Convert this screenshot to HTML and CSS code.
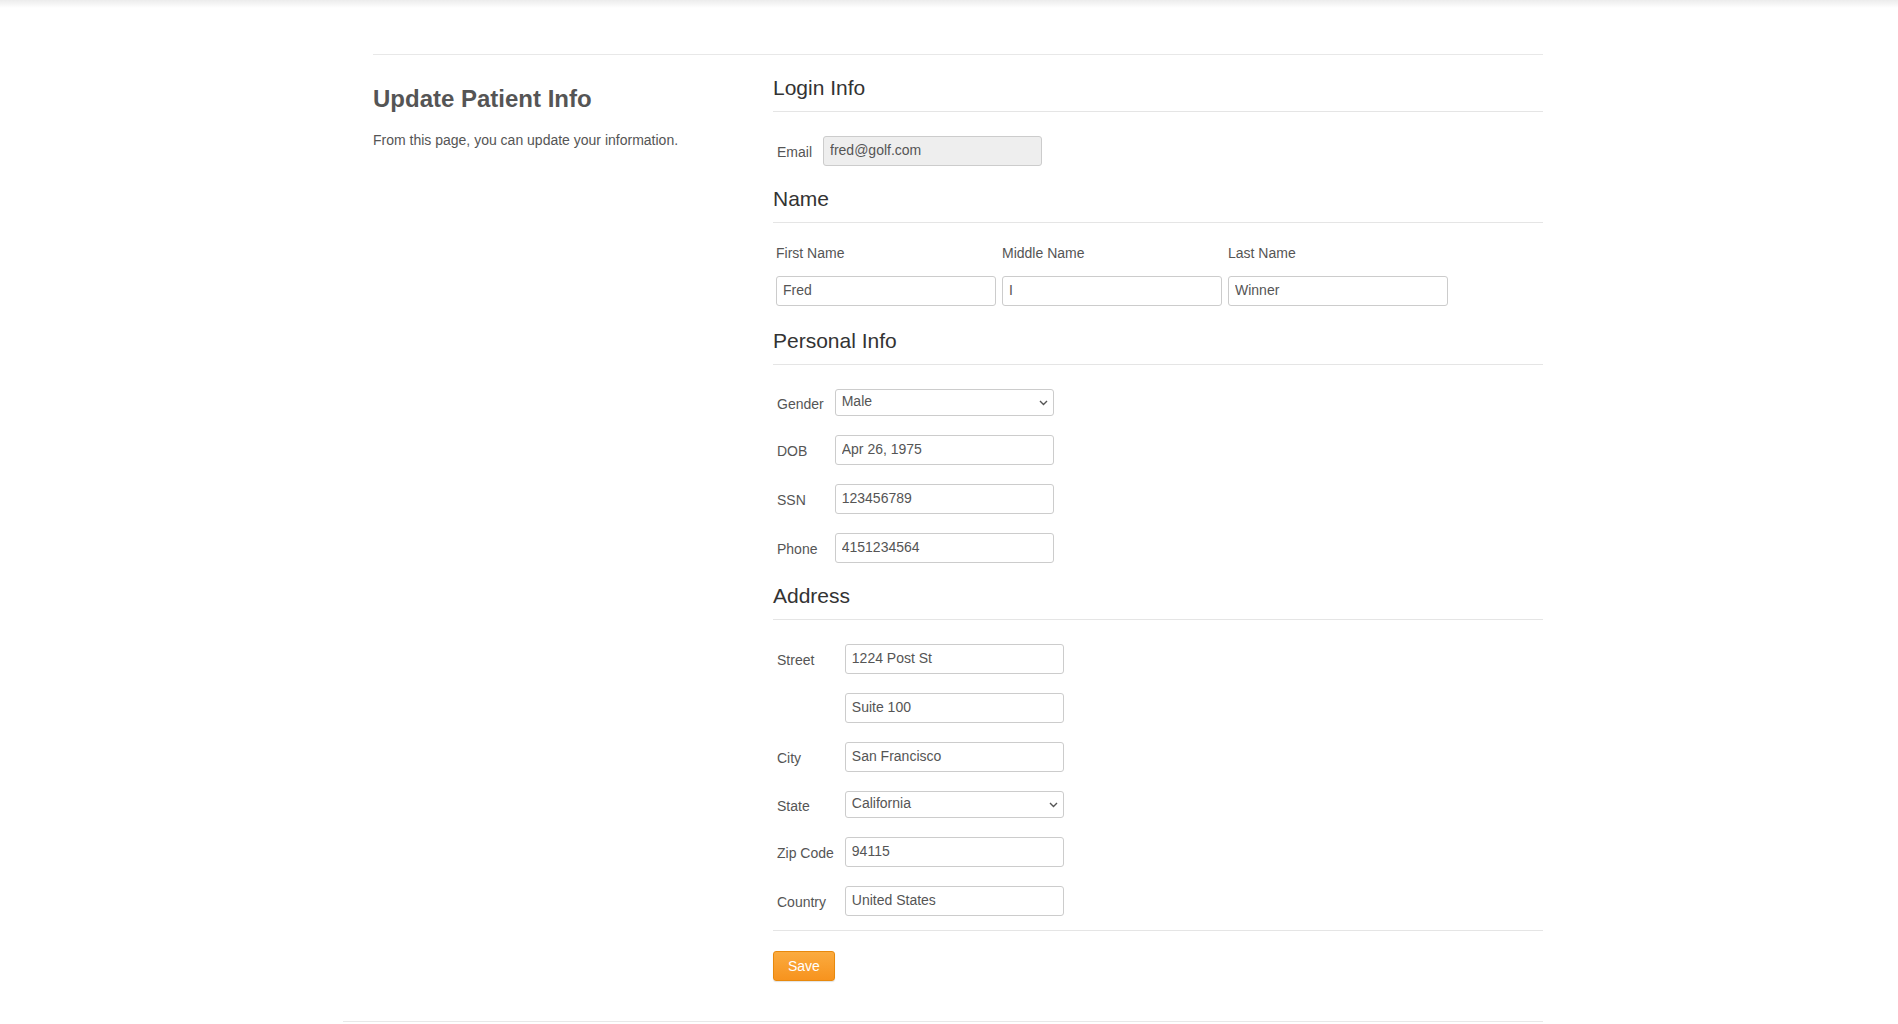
FILE: index.html
```html
<!DOCTYPE html>
<html lang="en">
<head>
<meta charset="utf-8">
<title>Update Patient Info</title>
<link rel="stylesheet" href="styles.css">
</head>
<body>
<div class="topshade"></div>
<div class="page">
  <div class="main">
    <aside class="sidebar">
      <h2 class="title">Update Patient Info</h2>
      <p class="lead">From this page, you can update your information.</p>
    </aside>
    <form class="content">
      <fieldset class="fs">
        <legend class="legend">Login Info</legend>
        <div class="form-grid">
          <label class="lbl">Email</label>
          <input class="field field-disabled" type="text" value="fred@golf.com" disabled>
        </div>
      </fieldset>

      <fieldset class="fs fs-name">
        <legend class="legend legend-name">Name</legend>
        <div class="name-grid">
          <label class="name-lbl">First Name</label>
          <label class="name-lbl">Middle Name</label>
          <label class="name-lbl">Last Name</label>
          <input class="field name-field" type="text" value="Fred">
          <input class="field name-field" type="text" value="I">
          <input class="field name-field" type="text" value="Winner">
        </div>
      </fieldset>

      <fieldset class="fs">
        <legend class="legend">Personal Info</legend>
        <div class="form-grid">
          <label class="lbl">Gender</label>
          <span class="select-wrap">
            <select class="select"><option>Male</option><option>Female</option></select>
            <svg class="chev" width="9" height="6" viewBox="0 0 9 6"><path d="M1 1 L4.5 4.5 L8 1" fill="none" stroke="#555" stroke-width="1.4"/></svg>
          </span>
          <label class="lbl">DOB</label>
          <input class="field" type="text" value="Apr 26, 1975">
          <label class="lbl">SSN</label>
          <input class="field" type="text" value="123456789">
          <label class="lbl">Phone</label>
          <input class="field" type="text" value="4151234564">
        </div>
      </fieldset>

      <fieldset class="fs">
        <legend class="legend">Address</legend>
        <div class="form-grid">
          <label class="lbl">Street</label>
          <input class="field" type="text" value="1224 Post St">
          <span class="lbl"></span>
          <input class="field" type="text" value="Suite 100">
          <label class="lbl">City</label>
          <input class="field" type="text" value="San Francisco">
          <label class="lbl">State</label>
          <span class="select-wrap">
            <select class="select"><option>California</option></select>
            <svg class="chev" width="9" height="6" viewBox="0 0 9 6"><path d="M1 1 L4.5 4.5 L8 1" fill="none" stroke="#555" stroke-width="1.4"/></svg>
          </span>
          <label class="lbl">Zip Code</label>
          <input class="field" type="text" value="94115">
          <label class="lbl">Country</label>
          <input class="field" type="text" value="United States">
        </div>
      </fieldset>

      <div class="actions">
        <button class="btn-save" type="button">Save</button>
      </div>
    </form>
  </div>
  <div class="footer"></div>
</div>
</body>
</html>
```

FILE: styles.css
```css
html, body {
  margin: 0;
  padding: 0;
  background: #fff;
}

body {
  font-family: "Liberation Sans", Arial, sans-serif;
  font-size: 14px;
  line-height: 20px;
  color: #555;
}

.topshade {
  height: 8px;
  background: linear-gradient(#ececec, #ffffff);
}

.page {
  width: 1200px;
  margin-left: 343px;
}

.main {
  margin-left: 30px;
  margin-top: 46px;
  border-top: 1px solid #e8e8e8;
  display: flex;
}

.sidebar {
  width: 400px;
  flex: none;
  padding-top: 31px;
}

.title {
  margin: 0;
  font-size: 24px;
  line-height: 26px;
  font-weight: bold;
  color: #555;
}

.lead {
  margin: 18px 0 0;
  font-size: 14px;
  line-height: 20px;
  color: #555;
}

.content {
  flex: 1;
  margin: 0;
  padding-top: 18px;
}

.fs {
  border: 0;
  margin: 0;
  padding: 0;
  min-width: 0;
}

.fs + .fs {
  margin-top: 18px;
}

.fs-name {
  padding-bottom: 2px;
}

.legend {
  display: block;
  width: 100%;
  padding: 0 0 8px;
  margin: 0 0 24px;
  font-size: 21px;
  line-height: 30px;
  color: #333;
  border-bottom: 1px solid #e5e5e5;
}

.legend-name {
  margin-bottom: 20px;
}

.form-grid {
  display: grid;
  grid-template-columns: max-content 219px;
  column-gap: 11px;
  row-gap: 19px;
  align-items: center;
  padding-left: 4px;
}

.lbl {
  font-size: 14px;
  line-height: 20px;
  color: #555;
  padding-top: 2px;
}

.field {
  box-sizing: border-box;
  height: 30px;
  width: 100%;
  margin: 0;
  padding: 0 6px 2px;
  border: 1px solid #ccc;
  border-radius: 3px;
  background: #fff;
  font-family: "Liberation Sans", Arial, sans-serif;
  font-size: 14px;
  color: #555;
}

.field-disabled {
  background: #eee;
  color: #555;
  -webkit-text-fill-color: #555;
  opacity: 1;
}

.name-grid {
  display: grid;
  grid-template-columns: repeat(3, 220px);
  column-gap: 6px;
  row-gap: 13px;
  padding-left: 3px;
}

.name-lbl {
  font-size: 14px;
  line-height: 20px;
  color: #555;
}

.select-wrap {
  position: relative;
  display: block;
  height: 27px;
}

.select {
  box-sizing: border-box;
  appearance: none;
  -webkit-appearance: none;
  width: 100%;
  height: 27px;
  margin: 0;
  padding: 0 20px 3px 6px;
  border: 1px solid #ccc;
  border-radius: 3px;
  background: #fff;
  font-family: "Liberation Sans", Arial, sans-serif;
  font-size: 14px;
  color: #555;
}

.chev {
  position: absolute;
  right: 6px;
  top: 11px;
  pointer-events: none;
}

.actions {
  margin-top: 14px;
  border-top: 1px solid #e5e5e5;
  padding-top: 20px;
}

.btn-save {
  height: 30px;
  padding: 0 14px 1px;
  border: 1px solid #e8890c;
  border-radius: 3px;
  background: linear-gradient(#fbab3f, #f7931e);
  box-shadow: 0 1px 1px rgba(0, 0, 0, 0.12);
  color: #fff;
  font-family: "Liberation Sans", Arial, sans-serif;
  font-size: 14px;
  cursor: pointer;
}

.footer {
  margin-top: 40px;
  border-top: 1px solid #e8e8e8;
}
```
